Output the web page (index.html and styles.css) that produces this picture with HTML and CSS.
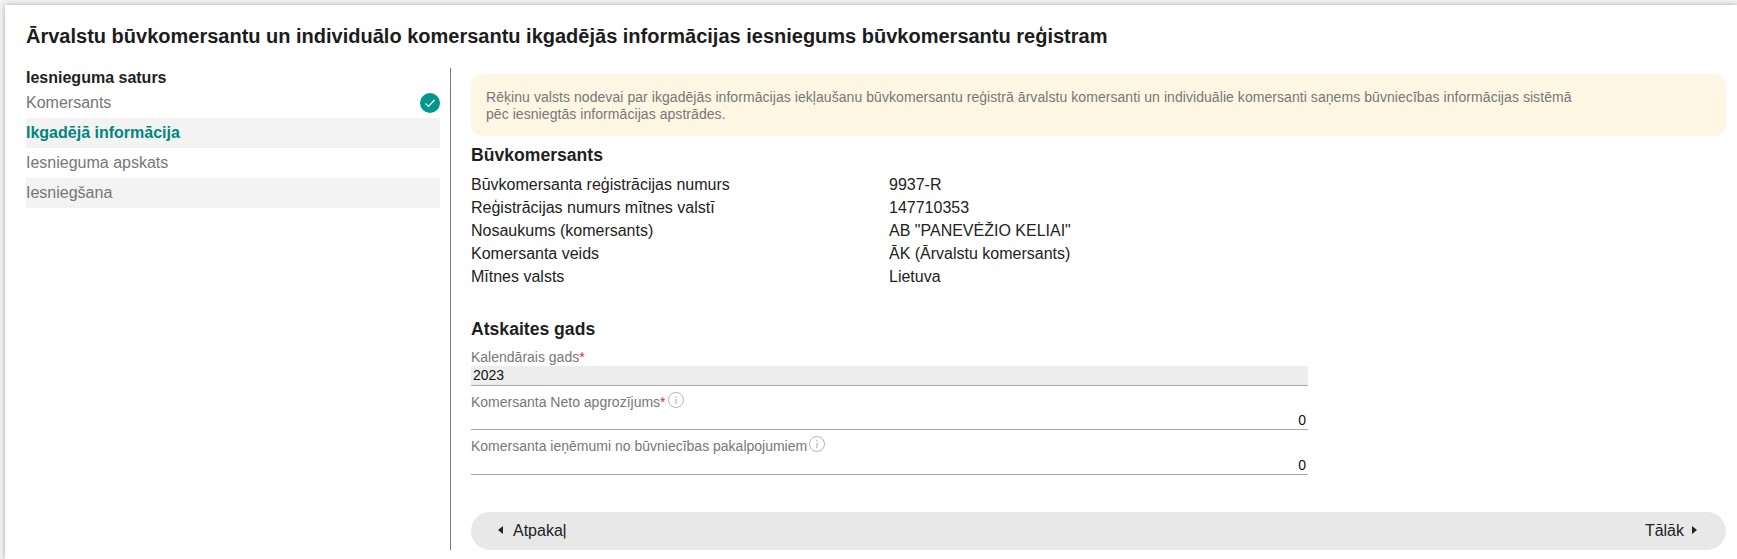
FILE: index.html
```html
<!DOCTYPE html>
<html lang="lv">
<head>
  <meta charset="UTF-8">
  <meta name="viewport" content="width=device-width, initial-scale=1.0">
  <title>Iesniegums</title>
  <link rel="stylesheet" href="styles.css">
</head>
<body>
  <div class="card">
    <h1>Ārvalstu būvkomersantu un individuālo komersantu ikgadējās informācijas iesniegums būvkomersantu reģistram</h1>

    <div class="layout">
      <div class="sidebar">
        <div class="sidebar-title">Iesnieguma saturs</div>
        <div class="step">
          Komersants
          <svg class="step-done" width="20" height="20" viewBox="0 0 20 20">
            <circle cx="10" cy="10" r="10" fill="#00978f"/>
            <path d="M5.5 10.5l3 3 6-6.5" fill="none" stroke="#fff" stroke-width="1.2"/>
          </svg>
        </div>
        <div class="step step-alt step-active">Ikgadējā informācija</div>
        <div class="step">Iesnieguma apskats</div>
        <div class="step step-alt">Iesniegšana</div>
      </div>

      <div class="main">
        <div class="notice">Rēķinu valsts nodevai par ikgadējās informācijas iekļaušanu būvkomersantu reģistrā ārvalstu komersanti un individuālie komersanti saņems būvniecības informācijas sistēmā pēc iesniegtās informācijas apstrādes.</div>

        <h2 class="section-first">Būvkomersants</h2>
        <div class="info-row"><span>Būvkomersanta reģistrācijas numurs</span><span>9937-R</span></div>
        <div class="info-row"><span>Reģistrācijas numurs mītnes valstī</span><span>147710353</span></div>
        <div class="info-row"><span>Nosaukums (komersants)</span><span>AB "PANEVĖŽIO KELIAI"</span></div>
        <div class="info-row"><span>Komersanta veids</span><span>ĀK (Ārvalstu komersants)</span></div>
        <div class="info-row"><span>Mītnes valsts</span><span>Lietuva</span></div>

        <h2 class="section-second">Atskaites gads</h2>
        <div class="fields">
          <div class="field">
            <div class="field-label">Kalendārais gads<span class="req">*</span></div>
            <div class="field-value field-disabled">2023</div>
          </div>
          <div class="field">
            <div class="field-label"><span>Komersanta Neto apgrozījums<span class="req">*</span></span>
              <svg class="hint" width="16" height="16" viewBox="0 0 16 16">
                <circle cx="8" cy="8" r="7.5" fill="none" stroke="#b5b5b5"/>
                <path d="M8 7v5M8 4v1.5" fill="none" stroke="#b5b5b5" stroke-width="1.2"/>
              </svg>
            </div>
            <div class="field-value field-number">0</div>
          </div>
          <div class="field">
            <div class="field-label"><span>Komersanta ieņēmumi no būvniecības pakalpojumiem</span>
              <svg class="hint" width="16" height="16" viewBox="0 0 16 16">
                <circle cx="8" cy="8" r="7.5" fill="none" stroke="#b5b5b5"/>
                <path d="M8 7v5M8 4v1.5" fill="none" stroke="#b5b5b5" stroke-width="1.2"/>
              </svg>
            </div>
            <div class="field-value field-number">0</div>
          </div>
        </div>

        <div class="nav-bar">
          <span class="nav-link"><span class="arrow-left"></span>Atpakaļ</span>
          <span class="nav-link">Tālāk<span class="arrow-right"></span></span>
        </div>
      </div>
    </div>
  </div>
</body>
</html>
```

FILE: styles.css
```css
html, body {
  height: 100%;
}
body {
  margin: 0;
  background: #f2f2f2;
  font-family: "Liberation Sans", Arial, sans-serif;
  color: #222;
  overflow: hidden;
}
.card {
  margin: 5px 0 0 5px;
  height: 554px;
  box-sizing: border-box;
  padding: 19px 11px 0 21px;
  background: #fff;
  box-shadow: 0 0 5px rgba(0, 0, 0, 0.3);
}
h1 {
  margin: 0;
  font-size: 20px;
  line-height: 24px;
  font-weight: bold;
  color: #1c1c1c;
}
.layout {
  display: flex;
  margin-top: 20px;
}
.sidebar {
  width: 414px;
  flex: none;
}
.sidebar-title {
  font-size: 16px;
  font-weight: bold;
  line-height: 20px;
  color: #222;
}
.step {
  display: flex;
  align-items: center;
  justify-content: space-between;
  height: 30px;
  font-size: 16px;
  color: #767676;
}
.step-alt {
  background: #f3f3f3;
}
.step-active {
  color: #00847e;
  font-weight: bold;
}
.main {
  flex: 1;
  margin-left: 10px;
  padding-left: 20px;
  padding-top: 6px;
  height: 482px;
  box-sizing: border-box;
  border-left: 1px solid #777;
}
.notice {
  height: 62px;
  box-sizing: border-box;
  padding: 15px 150px 0 15px;
  background: #fdf6e3;
  border-radius: 12px;
  font-size: 14px;
  line-height: 17px;
  letter-spacing: 0.06px;
  color: #777;
}
h2 {
  margin: 0;
  font-size: 17.6px;
  line-height: 22px;
  font-weight: bold;
  color: #1f1f1f;
}
.section-first {
  margin-top: 8px;
  margin-bottom: 7px;
}
.section-second {
  margin-top: 30px;
  margin-bottom: 9px;
}
.info-row {
  display: grid;
  grid-template-columns: 418px 1fr;
  height: 23px;
  font-size: 16px;
  line-height: 23px;
  color: #222;
}
.fields {
  width: 837px;
}
.field {
  margin-bottom: 8px;
}
.field-label {
  display: flex;
  height: 16px;
  font-size: 14px;
  line-height: 17px;
  color: #777;
}
.req {
  color: #d9264f;
}
.hint {
  margin: -2px 0 0 2px;
}
.field-value {
  height: 20px;
  box-sizing: border-box;
  padding: 0 2px;
  border-bottom: 1px solid #aaa;
  font-size: 14px;
  line-height: 18px;
  color: #111;
}
.field-disabled {
  margin-top: 1px;
  background: #ededed;
}
.field-number {
  line-height: 20px;
  text-align: right;
}
.field:last-child .field-number {
  height: 21px;
  line-height: 22px;
}
.nav-bar {
  display: flex;
  align-items: center;
  justify-content: space-between;
  height: 38px;
  margin-top: 37px;
  padding: 0 29px 0 27px;
  background: #e8e8e8;
  border-radius: 19px;
  font-size: 16px;
  color: #222;
}
.nav-link {
  display: flex;
  align-items: center;
}
.arrow-left {
  width: 0;
  height: 0;
  margin: -2px 10px 0 0;
  border-top: 4px solid transparent;
  border-bottom: 4px solid transparent;
  border-right: 5px solid #222;
}
.arrow-right {
  width: 0;
  height: 0;
  margin: -2px 0 0 8px;
  border-top: 4px solid transparent;
  border-bottom: 4px solid transparent;
  border-left: 5px solid #222;
}
```
